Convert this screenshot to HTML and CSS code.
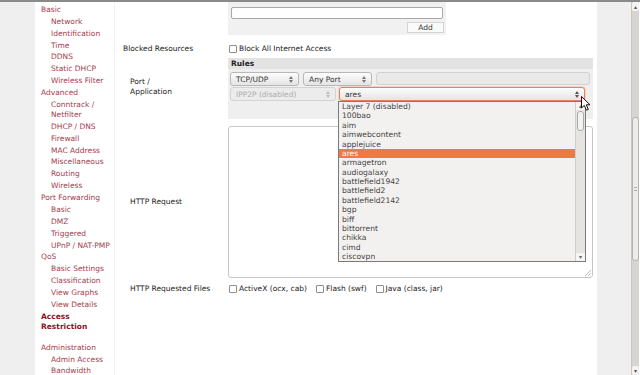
FILE: index.html
```html
<!DOCTYPE html>
<html lang="en">
<head>
  <meta charset="UTF-8" />
  <title>Access Restriction</title>
  <link rel="stylesheet" href="styles.css">
</head>
<body>
  <div class="topline"></div>
  <div class="viewport">
    <div class="gutter"></div>

    <nav class="menu">
      <a class="top">Basic</a>
      <a class="sub">Network</a>
      <a class="sub">Identification</a>
      <a class="sub">Time</a>
      <a class="sub">DDNS</a>
      <a class="sub">Static DHCP</a>
      <a class="sub">Wireless Filter</a>
      <a class="top">Advanced</a>
      <a class="sub">Conntrack /<br>Netfilter</a>
      <a class="sub">DHCP / DNS</a>
      <a class="sub">Firewall</a>
      <a class="sub">MAC Address</a>
      <a class="sub">Miscellaneous</a>
      <a class="sub">Routing</a>
      <a class="sub">Wireless</a>
      <a class="top">Port Forwarding</a>
      <a class="sub">Basic</a>
      <a class="sub">DMZ</a>
      <a class="sub">Triggered</a>
      <a class="sub">UPnP / NAT-PMP</a>
      <a class="top">QoS</a>
      <a class="sub">Basic Settings</a>
      <a class="sub">Classification</a>
      <a class="sub">View Graphs</a>
      <a class="sub">View Details</a>
      <a class="top active">Access<br>Restriction</a>
      <a class="top spaced">Administration</a>
      <a class="sub">Admin Access</a>
      <a class="sub">Bandwidth</a>
    </nav>

    <main class="content">
      <div class="row">
        <div class="label"></div>
        <div class="grid-box">
          <div class="grid-head">MAC / IP Address</div>
          <div class="text-input"></div>
          <div class="grid-actions"><span class="btn">Add</span></div>
        </div>
      </div>

      <div class="row blocked">
        <div class="label">Blocked Resources</div>
        <label class="check"><span class="box"></span>Block All Internet Access</label>
      </div>

      <div class="row center">
        <div class="label indent">Port /<br>Application</div>
        <div class="rules">
          <div class="rules-head">Rules</div>
          <div class="rules-line">
            <div class="sel w69">TCP/UDP <svg class="arrows" width="4" height="7" viewBox="0 0 4 7"><path d="M0 3 L2 0 L4 3 Z M0 4 L2 7 L4 4 Z" fill="#777"/></svg></div>
            <div class="sel w69">Any Port <svg class="arrows" width="4" height="7" viewBox="0 0 4 7"><path d="M0 3 L2 0 L4 3 Z M0 4 L2 7 L4 4 Z" fill="#777"/></svg></div>
            <div class="text-input disabled"></div>
          </div>
          <div class="rules-line">
            <div class="sel w106 off">IPP2P (disabled) <svg class="arrows" width="4" height="7" viewBox="0 0 4 7"><path d="M0 3 L2 0 L4 3 Z M0 4 L2 7 L4 4 Z" fill="#bbb"/></svg></div>
            <div class="sel w246 focus">ares <svg class="arrows" width="4" height="7" viewBox="0 0 4 7"><path d="M0 3 L2 0 L4 3 Z M0 4 L2 7 L4 4 Z" fill="#555"/></svg>
              <div class="droplist">
                <ul class="options">
                  <li>Layer 7 (disabled)</li>
                  <li>100bao</li>
                  <li>aim</li>
                  <li>aimwebcontent</li>
                  <li>applejuice</li>
                  <li class="picked">ares</li>
                  <li>armagetron</li>
                  <li>audiogalaxy</li>
                  <li>battlefield1942</li>
                  <li>battlefield2</li>
                  <li>battlefield2142</li>
                  <li>bgp</li>
                  <li>biff</li>
                  <li>bittorrent</li>
                  <li>chikka</li>
                  <li>cimd</li>
                  <li>ciscovpn</li>
                </ul>
                <div class="mini-scroll">
                  <span class="mini-btn">▴</span>
                  <span class="mini-thumb"></span>
                  <span class="mini-fill"></span>
                  <span class="mini-btn">▾</span>
                </div>
              </div>
              <svg class="cursor" width="11" height="16" viewBox="0 0 11 16"><path d="M0.5 0.5 L0.5 12 L3.3 9.4 L5.4 14.2 L7.3 13.4 L5.3 8.8 L9 8.8 Z" fill="#fff" stroke="#111" stroke-width="1"/></svg>
            </div>
          </div>
        </div>
      </div>

      <div class="row center">
        <div class="label indent">HTTP Request</div>
        <div class="textarea">
          <svg class="grip" width="7" height="7" viewBox="0 0 7 7"><path d="M7 1 L1 7 M7 4 L4 7" stroke="#bbb" stroke-width="1"/></svg>
        </div>
      </div>

      <div class="row files">
        <div class="label indent">HTTP Requested Files</div>
        <label class="check"><span class="box"></span>ActiveX (ocx, cab)</label>
        <label class="check"><span class="box"></span>Flash (swf)</label>
        <label class="check"><span class="box"></span>Java (class, jar)</label>
      </div>
    </main>

    <div class="gutter right"></div>

    <div class="scrollbar">
      <span class="sb-btn">▴</span>
      <span class="sb-track top"></span>
      <span class="sb-thumb"><i></i></span>
      <span class="sb-track"></span>
      <span class="sb-btn">▾</span>
    </div>
  </div>
</body>
</html>
```

FILE: styles.css
```css
body {
  margin: 0;
  font-family: "DejaVu Sans", Verdana, sans-serif;
  font-size: 7.5px;
  color: #222;
  background: #fff;
  overflow: hidden;
}
.topline {
  height: 2px;
  background: #8a8a8a;
}
.viewport {
  display: flex;
  height: 373px;
  overflow: hidden;
}
.gutter {
  width: 35px;
  flex-shrink: 0;
  background: #efefef;
}
.gutter.right {
  width: 34px;
}

/* left menu */
.menu {
  width: 80px;
  flex-shrink: 0;
  padding-top: 2px;
  box-sizing: border-box;
  display: flex;
  flex-direction: column;
  background: #fff;
  border-right: 1px solid #f3f3f3;
}
.menu a {
  display: block;
  line-height: 10px;
  padding: 0.95px 0;
  color: #a63a4b;
  white-space: nowrap;
}
.menu .top {
  padding-left: 6px;
}
.menu .sub {
  padding-left: 16px;
}
.menu .active {
  font-weight: bold;
  color: #8e0f1d;
}
.menu .spaced {
  margin-top: 9px;
}

/* main form */
.content {
  width: 482px;
  flex-shrink: 0;
  padding-left: 8px;
  box-sizing: border-box;
}
.row {
  display: flex;
  align-items: flex-start;
}
.row.center {
  align-items: center;
}
.label {
  width: 105px;
  flex-shrink: 0;
  line-height: 10px;
  color: #222;
}
.label.indent {
  padding-left: 7px;
  box-sizing: border-box;
}

.grid-box {
  margin-top: -12px;
  width: 218px;
  padding: 2px 3px 2px 3px;
  box-sizing: border-box;
  background: #f1f1f1;
}
.grid-head {
  font-weight: bold;
  line-height: 9px;
}
.text-input {
  margin-top: 6px;
  height: 12px;
  box-sizing: border-box;
  border: 1px solid #a9a9a9;
  border-radius: 2px;
  background: #fff;
}
.grid-actions {
  display: flex;
  justify-content: flex-end;
  margin-top: 3px;
}
.btn {
  width: 37px;
  height: 11px;
  line-height: 9px;
  box-sizing: border-box;
  border: 1px solid #d4d4d4;
  background: #fafafa;
  text-align: center;
  color: #333;
  margin-right: -1px;
}

.row.blocked {
  margin-top: 8px;
  align-items: center;
  height: 12px;
}
.check {
  display: flex;
  align-items: center;
  line-height: 10px;
  color: #222;
  margin-right: 9px;
}
.check .box {
  width: 8px;
  height: 8px;
  box-sizing: border-box;
  border: 1px solid #8d8d8d;
  border-radius: 1px;
  background: #fff;
  margin: 0 2px 0 1px;
}

/* rules grid */
.row.center + .row.center {
  margin-top: 7px;
}
.rules {
  margin-top: 3px;
  width: 365px;
  height: 61px;
  background: #efefef;
  box-sizing: border-box;
}
.rules-head {
  height: 11px;
  line-height: 11px;
  padding-left: 3px;
  font-weight: bold;
  background: #e3e3e3;
}
.rules-line {
  display: flex;
  gap: 3px;
  padding: 0 3px 0 2px;
  margin-top: 1px;
}
.rules-head + .rules-line {
  margin-top: 3px;
}
.rules-line .text-input {
  margin-top: 0;
  flex: 1;
  height: 13px;
  background: #e9e9e9;
  border-color: #d2d2d2;
  border-radius: 3px;
  margin-left: 1px;
}
.sel {
  position: relative;
  display: flex;
  align-items: center;
  justify-content: space-between;
  height: 14px;
  box-sizing: border-box;
  padding: 0 5px 0 5px;
  border: 1px solid #b8b8b8;
  border-radius: 3px;
  background: linear-gradient(#fdfdfd, #e4e4e4);
  color: #333;
}
.w69 { width: 69px; }
.w69 + .w69 { margin-left: 1px; }
.w106 { width: 106px; }
.w246 { width: 246px; }
.sel.off {
  color: #ababab;
  background: #ececec;
  border-color: #d3d3d3;
}
.sel.focus {
  border-color: #e5825c;
  box-shadow: 0 0 0 1px rgba(240, 130, 90, 0.25);
}
.arrows {
  flex-shrink: 0;
}

/* open dropdown */
.droplist {
  position: absolute;
  top: 13px;
  left: -2px;
  width: 248px;
  height: 161px;
  box-sizing: border-box;
  border: 1px solid #7b7b7b;
  background: #f3f1ef;
  display: flex;
  z-index: 5;
}
.options {
  list-style: none;
  margin: 0;
  padding: 0;
  flex: 1;
}
.options li {
  height: 9.375px;
  line-height: 9.375px;
  padding-left: 3px;
  color: #444;
  font-size: 7.6px;
}
.options li.picked {
  background: #f07746;
  color: #fff;
}
.mini-scroll {
  width: 9px;
  display: flex;
  flex-direction: column;
  background: #e6e4e1;
  border-left: 1px solid #d0cecb;
}
.mini-btn {
  height: 8px;
  font-size: 6px;
  line-height: 8px;
  text-align: center;
  color: #666;
  background: #f6f5f4;
}
.mini-thumb {
  margin: 1px 1px 0;
  height: 18px;
  border: 1px solid #aaa;
  border-radius: 3px;
  background: #f4f3f1;
}
.mini-fill {
  flex: 1;
}
.cursor {
  position: absolute;
  left: 241px;
  top: 8px;
  z-index: 6;
}

.textarea {
  position: relative;
  width: 365px;
  height: 152px;
  box-sizing: border-box;
  border: 1px solid #c6c6c6;
  border-radius: 3px;
  background: #fff;
}
.grip {
  position: absolute;
  right: 1px;
  bottom: 1px;
}

.row.files {
  margin-top: 5px;
  align-items: center;
  height: 11px;
}
.row.files .check {
  margin-right: 8px;
}

/* page scrollbar */
.scrollbar {
  width: 8px;
  flex-shrink: 0;
  display: flex;
  flex-direction: column;
  background: #d7d5d1;
  border-left: 1px solid #c9c7c3;
  box-sizing: border-box;
}
.sb-btn {
  height: 9px;
  font-size: 6px;
  line-height: 9px;
  text-align: center;
  color: #555;
  background: #f4f3f1;
  border-radius: 2px;
}
.sb-track.top {
  height: 107px;
}
.sb-track {
  flex: 1;
}
.sb-thumb {
  height: 142px;
  border: 1px solid #b4b2ae;
  border-radius: 3px;
  background: #edecea;
  display: flex;
  align-items: center;
  justify-content: center;
}
.sb-thumb i {
  width: 3px;
  height: 4px;
  border-top: 1px solid #aaa;
  border-bottom: 1px solid #aaa;
  box-sizing: border-box;
}
```
